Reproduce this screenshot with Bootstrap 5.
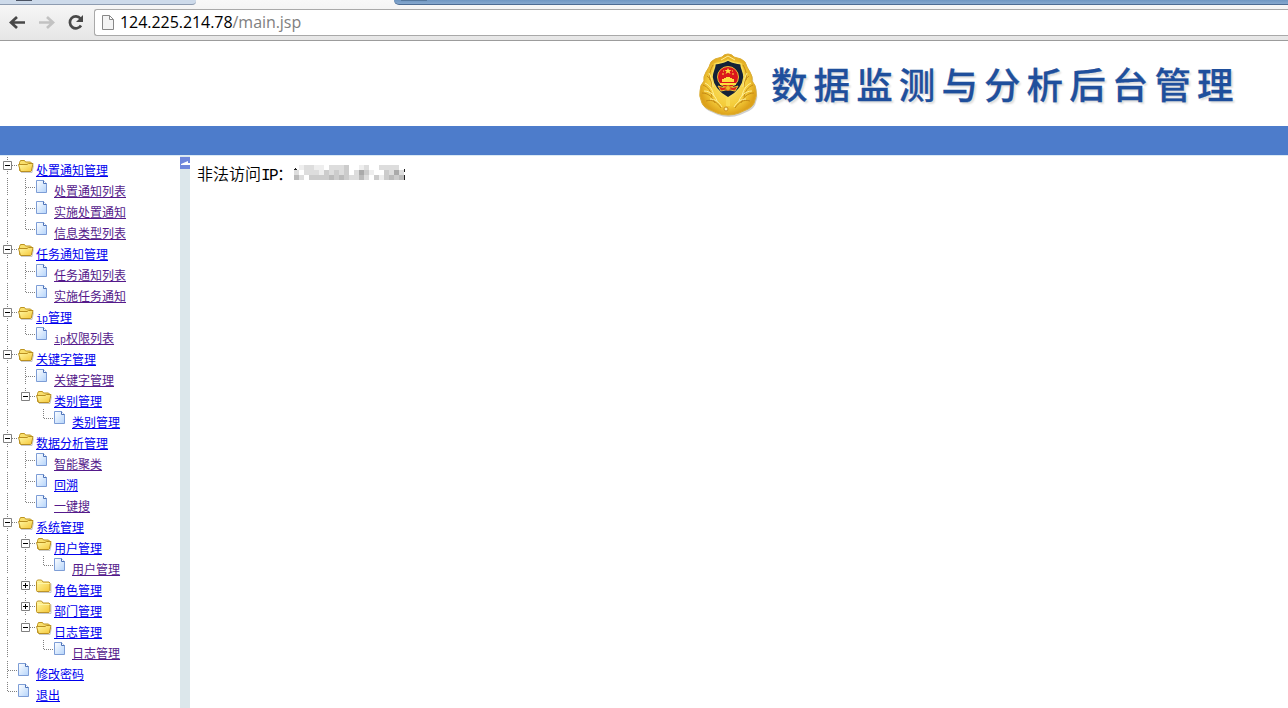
<!DOCTYPE html>
<html lang="zh-CN">
<head>
<meta charset="utf-8">
<title>数据监测与分析后台管理</title>
<link href="https://cdn.jsdelivr.net/npm/bootstrap@5.3.0/dist/css/bootstrap.min.css" rel="stylesheet">
<style>
body{height:708px;font-family:"Liberation Sans","Noto Sans CJK SC",sans-serif;color:#000;background:#fff}
.chrome{height:41px;background:linear-gradient(#f8f8f8,#e6e6e6);border-bottom:1px solid #9c9c9c}
.tabstrip{height:5px}
.tab-left{width:196px;height:5px;background:#cddaea;border-bottom:1px solid #8d9bb0;border-bottom-right-radius:4px}
.tab-dark{width:16px;height:1px;background:#4b5363;margin-left:16px}
.tab-rest{margin-left:198px;height:5px;background:linear-gradient(#6f96c2,#86a8ce);border-bottom:1px solid #4c6b93;border-bottom-left-radius:5px}
.tab-new{width:26px;height:1px;background:#56799f;margin-left:7px}
.address{margin-left:94px;height:27px;margin-top:4px;border:1px solid #a9a9a9;border-right:0;border-radius:3px 0 0 3px;font:16px/25px "Open Sans","Noto Sans",sans-serif;letter-spacing:-.05px;color:#808080}
.address b{font-weight:400;color:#000}
.tool{position:absolute;left:0;top:9px}
.banner{height:85px;padding-left:698px;padding-top:7px}
.sitename{font:500 36.5px/50px "Noto Sans CJK SC",sans-serif;letter-spacing:6.1px;color:#1f4f9c;-webkit-text-stroke:.3px #1f4f9c;text-shadow:2px 2px 2px #ddd;margin-left:11px;margin-top:11px}
.bluebar{height:29px;background:#4d7ccb}
.workarea{border-top:1px solid #dbeaf5}
.symbols{width:0;height:0}
.tree{width:180px;padding-top:1px}
.trow{height:21px}
.trow svg{width:18px;height:18px;flex:none}
.trow a{font:12px/18px "Noto Sans CJK SC",sans-serif;margin-top:4px;color:#00e;text-decoration:underline;text-underline-offset:1px;white-space:nowrap}
.trow a.seen{color:#551a8b}
.trow i{font:10px/12px "Liberation Mono",monospace}
.splitter{width:10px;background:#dce7eb;padding-top:1px}
.collapser{height:12px;background:#6f87dc}
.message{font:16px/20px "Noto Sans CJK SC",sans-serif;font-weight:350;padding:7px 0 0 7px}
.message i{font:16px/16px "Liberation Mono",monospace;letter-spacing:-1.6px}
.message svg{margin:2px 0 0 1px}
</style>
</head>
<body class="d-flex flex-column overflow-hidden">
<svg class="symbols position-absolute">
<defs>
<linearGradient id="gold" x2="1" y2="1"><stop stop-color="#fffaa8"/><stop offset="1" stop-color="#f5c636"/></linearGradient>
<linearGradient id="blue" x2="1" y2="1"><stop stop-color="#fff"/><stop offset="1" stop-color="#b4d4fb"/></linearGradient>
<g id="v"><path d="M7.5 0V18" stroke="#808080" stroke-dasharray="1 1"/></g>
<g id="t"><path d="M7.5 0V18M8 9.5H18" stroke="#808080" stroke-dasharray="1 1"/></g>
<g id="l"><path d="M7.5 0V10M8 9.5H18" stroke="#808080" stroke-dasharray="1 1"/></g>
<g id="box"><path d="M3.5 4.5h8v8h-8z" fill="#fff" stroke="#808080"/><path d="M5 8.5h5" stroke="#000"/><path d="M12 8.5h6" stroke="#808080" stroke-dasharray="1 1"/></g>
<g id="m"><path d="M7.5 0V18" stroke="#808080" stroke-dasharray="1 1"/><use href="#box"/></g>
<g id="n"><path d="M7.5 0V4" stroke="#808080" stroke-dasharray="1 1"/><use href="#box"/></g>
<g id="p"><use href="#m"/><path d="M7.5 6v5" stroke="#000"/></g>
<g id="O"><path d="M3 15.500h11l1.500-7" fill="none" stroke="#999" opacity=".5"/><path d="M1.500 13.500v-8l1-2h4l1 1.500h5l1 1v8z" fill="#f9df6c" stroke="#bd9420"/><path d="M.5 7.500h8.500l1.500-1h4.500l-1.500 7-1 1H2.500z" fill="url(#gold)" stroke="#b98f20"/></g>
<g id="F"><path d="M2 15.500h13v-9" fill="none" stroke="#999" opacity=".5"/><path d="M.5 13.500V4.500l1-1.500h4l1.500 2h6l1 1v7.500l-1 1h-12z" fill="url(#gold)" stroke="#bd9428"/><path d="M1.500 6.500h12" stroke="#fff5a6"/></g>
<g id="D"><path d="M.5 2.500h7l3 3v9H.5z" fill="url(#blue)" stroke="#7d9dd6"/><path d="M7.500 2.500v3h3" fill="#fff" stroke="#4c72b9"/></g>
</defs>
</svg>
<header class="chrome position-relative flex-shrink-0">
<div class="tabstrip d-flex"><div class="tab-left"><div class="tab-dark"></div></div><div class="tab-rest flex-grow-1"><div class="tab-new"></div></div></div>
<svg class="tool" width="90" height="28" fill="none" stroke="#484848" stroke-width="2.700"><path d="M25 13.500H12M17 8l-6 5.500 6 5.500"/><path d="M39 13.500h13M47 8l6 5.500-6 5.500" stroke="#c2c2c2"/><path d="M80.500 9.500a6 6 0 1 0 .5 7"/><path d="M83 6v7h-7z" fill="#484848" stroke="none"/></svg>
<div class="address bg-white d-flex"><svg class="mx-1" width="17" height="25" viewBox="-1 0 17 25"><path d="M2.500 5.500h7l4 4v10h-11zM9.500 5.500v4h4" fill="#f4f4f4" stroke="#888"/></svg><span><b>124.225.214.78</b>/main.jsp</span></div>
</header>
<div class="banner d-flex flex-shrink-0">
<svg id="emblem" class="flex-shrink-0" width="62" height="72" viewBox="0 0 62 72">
<defs><radialGradient id="wreath"><stop stop-color="#fbe36a"/><stop offset=".7" stop-color="#f4cc3a"/><stop offset="1" stop-color="#dda21b"/></radialGradient></defs>
<path id="outline" d="M30 6q4 0 6 3l7 2q5 2 6 8l3 5q3 5 2 9 4 4 4 10 1 5-1 9-1 6-7 9l-9 4q-5 2-11 2t-11-2l-9-4q-6-3-7-9-2-4-1-9 0-6 4-10-1-4 2-9l3-5q1-6 6-8l7-2q2-3 6-3z" fill="#888" opacity=".4" transform="translate(1 2)"/>
<path d="M30 6q4 0 6 3l7 2q5 2 6 8l3 5q3 5 2 9 4 4 4 10 1 5-1 9-1 6-7 9l-9 4q-5 2-11 2t-11-2l-9-4q-6-3-7-9-2-4-1-9 0-6 4-10-1-4 2-9l3-5q1-6 6-8l7-2q2-3 6-3z" fill="url(#wreath)" stroke="#dcae34"/>
<g fill="none"><path d="M5 37c5 2 8 6 9 12M4 45c6 0 11 4 13 10M8 53c6-2 11 1 15 7M9 28c4 3 5 7 5 11M15 17c-3 5-4 10-3 15M55 37c-5 2-8 6-9 12M56 45c-6 0-11 4-13 10M52 53c-6-2-11 1-15 7M51 28c-4 3-5 7-5 11M45 17c3 5 4 10 3 15" stroke="#c48a16"/><path d="M7 35c6 3 8 8 9 13M6 43c6 0 11 4 13 10M12 51c5 0 9 3 12 8M11 25c2 4 4 8 4 14M53 35c-6 3-8 8-9 13M54 43c-6 0-11 4-13 10M48 51c-5 0-9 3-12 8M49 25c-2 4-4 8-4 14M23 12l7-4 7 4" stroke="#fff099"/></g>
<path d="M30 12c4 3 9 3 13 4 0 4 3 8 3 13-1 10-7 16-16 21-9-5-15-11-16-21 0-5 3-9 3-13 4-1 9-1 13-4z" fill="#142238" stroke="#f9dc58" stroke-width="1.500"/>
<circle cx="30" cy="29" r="10.500" fill="#db171b" stroke="#efb637"/>
<path d="M30 20l1 2h2.500l-2 1.500 1 2.500-2.500-1.500-2.500 1.500 1-2.500-2-1.500H29zM24 34h12v-3h-2v-1h-2v-1h-4v1h-2v1h-2zM22 35h16v2H22z" fill="#ffdd3e"/><path d="M24 26h2M34 26h2M25 23h1M34 23h1" stroke="#ffdd3e"/>
<path d="M20 38q5 3 10 0 5 3 10 0l-3 5q-7-3-14 0z" fill="#e52a1b" stroke="#f1be32"/><circle cx="30" cy="40" r="2.500" fill="#eeb826" stroke="#d66b18"/>
<path d="M28 50h4v8h-4z" fill="#f8dc57"/><circle cx="28" cy="61" r="2" fill="#fff1a0" stroke="#ca8c1d"/>
</svg>
<div class="sitename text-nowrap">数据监测与分析后台管理</div>
</div>
<div class="bluebar flex-shrink-0"></div>
<div class="workarea d-flex flex-grow-1">
<nav class="tree flex-shrink-0" id="tree"></nav>
<div class="splitter flex-shrink-0"><div class="collapser"><svg class="d-block" width="10" height="12"><path d="M1 7l7-3v2h2v2H1z" fill="#fff"/></svg></div></div>
<main class="message d-flex align-items-start"><span>非法访问<i>IP</i>：</span><svg id="masked" width="112" height="16" shape-rendering="crispEdges"></svg></main>
</div>
<script src="https://cdn.jsdelivr.net/npm/bootstrap@5.3.0/dist/js/bootstrap.bundle.min.js"></script>
<script>
// Each row: connector and icon cells, label, visited flag. "_" is an empty cell.
const rows=[["mO","处置通知管理"],["vtD","处置通知列表",1],["vtD","实施处置通知",1],["vlD","信息类型列表",1],
["mO","任务通知管理"],["vtD","任务通知列表",1],["vlD","实施任务通知",1],["mO","<i>ip</i>管理"],["vlD","<i>ip</i>权限列表",1],
["mO","关键字管理"],["vtD","关键字管理",1],["vnO","类别管理"],["v_lD","类别管理"],["mO","数据分析管理"],["vtD","智能聚类",1],["vtD","回溯"],["vlD","一键搜",1],
["mO","系统管理"],["vmO","用户管理"],["vvlD","用户管理",1],["vpF","角色管理"],["vpF","部门管理"],["vnO","日志管理"],["v_lD","日志管理",1],["tD","修改密码"],["lD","退出"]];
document.getElementById("tree").innerHTML=rows.map(([cells,label,seen])=>
 `<div class="trow d-flex align-items-start">${[...cells].map(c=>`<svg>${c==="_"?"":`<use href="#${c}"/>`}</svg>`).join("")}<a href="#" class="${seen?"seen":""}">${label}</a></div>`).join("");
// Mosaic over the address: one hex digit of grey per 5px tile.
const mosaic=["feddeefdddcffedffddddf","dfdddecdcdcfdaceffcdad","bdfccccbcbcddbdfcecbcb"];
document.getElementById("masked").innerHTML=mosaic.map((line,y)=>[...line].map((g,x)=>
 `<path fill="#${g+g+g}" d="M${x*5} ${y*5}h5v5h-5z"/>`).join("")).join("")+'<path d="M0 4.500h3M1.500 3v2M110.500 4v3M110.500 10v5" stroke="#222" fill="none"/>';
</script>
</body>
</html>
